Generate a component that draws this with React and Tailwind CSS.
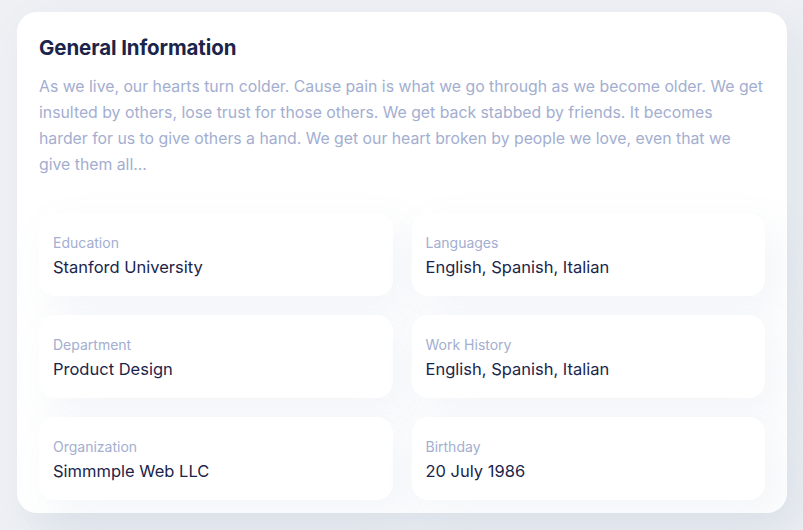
const items = [
  { label: "Education", value: "Stanford University" },
  { label: "Languages", value: "English, Spanish, Italian" },
  { label: "Department", value: "Product Design" },
  { label: "Work History", value: "English, Spanish, Italian" },
  { label: "Organization", value: "Simmmple Web LLC" },
  { label: "Birthday", value: "20 July 1986" },
];

function InfoCard({ label, value }) {
  return (
    <div className="bg-white rounded-[16px] h-[83px] px-[14px] pt-[21px] shadow-[14px_17px_40px_4px_rgba(112,144,176,0.08)]">
      <p className="text-[14px] leading-[18px] text-[#a3aed0]">{label}</p>
      <p className="text-[16.5px] leading-[24px] mt-[3px] text-[#1b254b]">{value}</p>
    </div>
  );
}

export default function App() {
  return (
    <div className="h-[530px] w-[803px] bg-[#eef0f4] pt-[12px] pl-[17px] font-['Inter',sans-serif]">
      <div className="w-[770px] h-[501px] bg-white rounded-[20px] px-[22px] pt-[23px] shadow-[14px_17px_40px_4px_rgba(112,144,176,0.1)]">
        <h2 className="text-[20.5px] leading-[26px] font-bold text-[#1b254b] tracking-[-0.1px]">General Information</h2>
        <p className="mt-[13px] text-[15.8px] leading-[26px] text-[#a3aed0] whitespace-nowrap">
          As we live, our hearts turn colder. Cause pain is what we go through as we become older. We get
          <br />
          insulted by others, lose trust for those others. We get back stabbed by friends. It becomes
          <br />
          harder for us to give others a hand. We get our heart broken by people we love, even that we
          <br />
          give them all...
        </p>
        <div className="mt-[35px] grid grid-cols-2 gap-x-[19px] gap-y-[19px]">
          {items.map((it) => (
            <InfoCard key={it.label} label={it.label} value={it.value} />
          ))}
        </div>
      </div>
    </div>
  );
}
